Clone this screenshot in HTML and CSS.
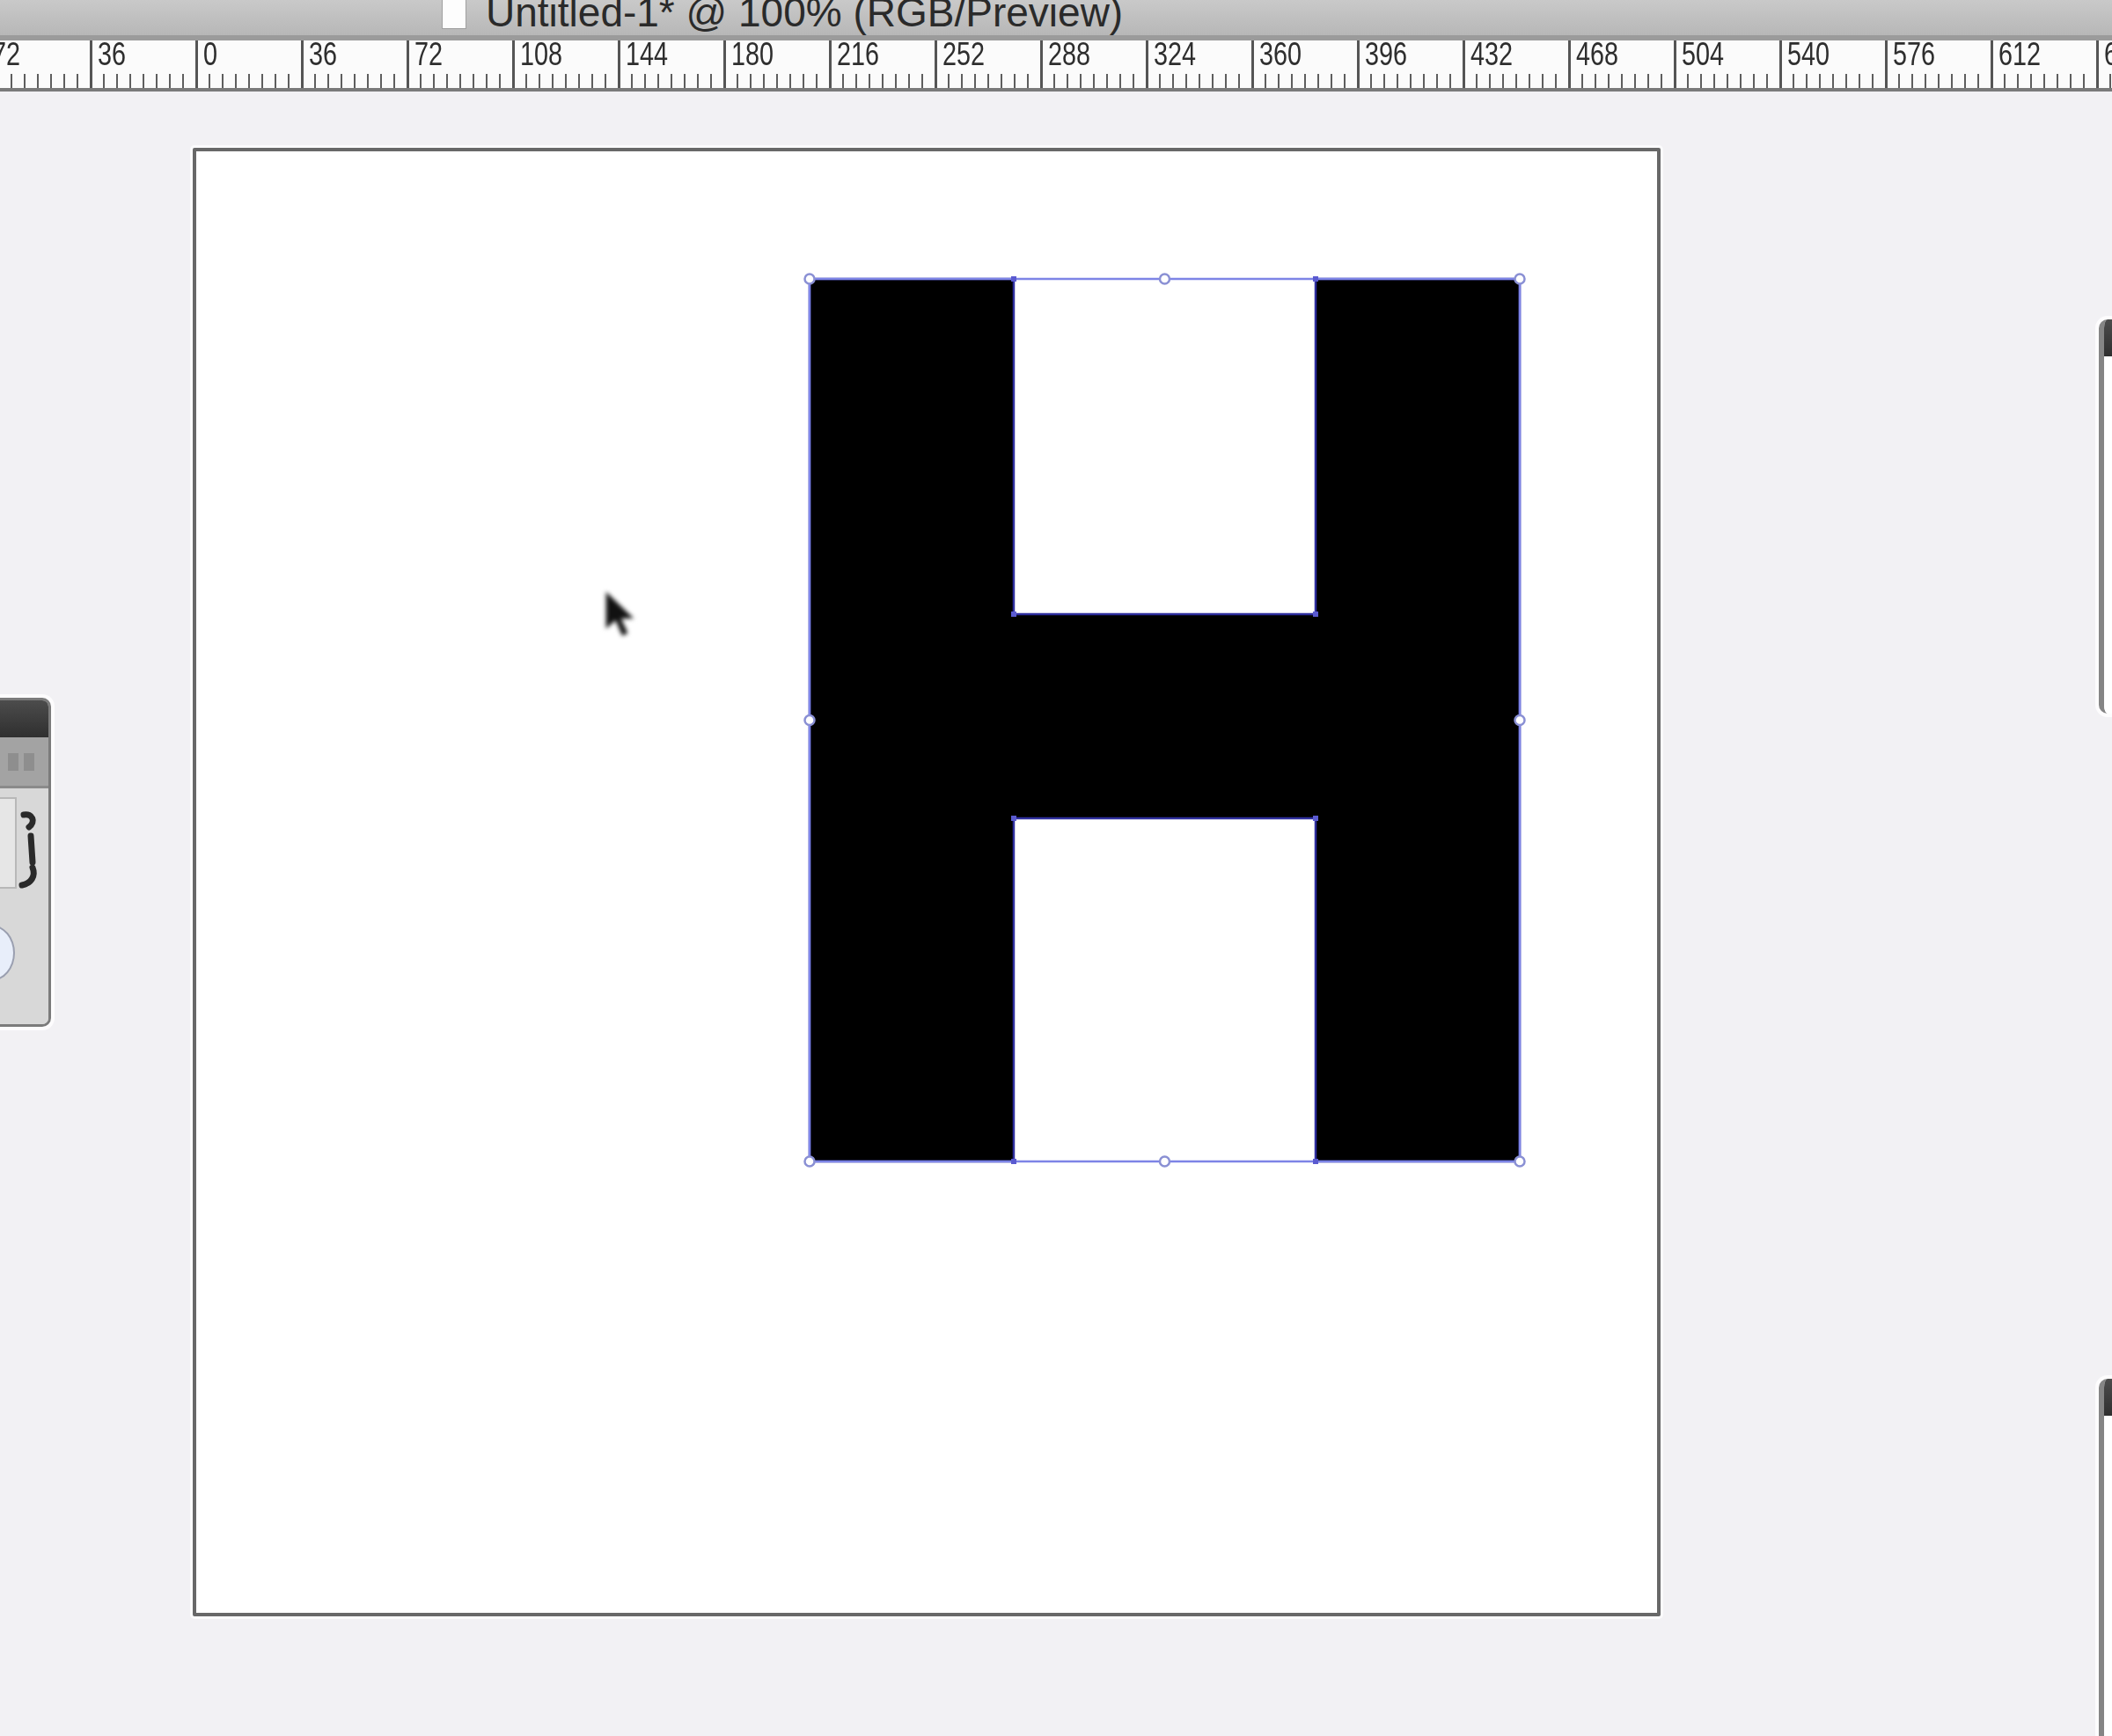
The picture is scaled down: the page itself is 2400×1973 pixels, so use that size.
FILE: index.html
```html
<!DOCTYPE html>
<html lang="en">
<head>
    <meta charset="UTF-8">
    <title>Untitled-1* @ 100% (RGB/Preview)</title>
    <link rel="stylesheet" href="styles.css">
</head>
<body>
    <div class="titlebar">
        <span class="doc-icon"></span>
        <span class="doc-title">Untitled-1* @ 100% (RGB/Preview)</span>
    </div>

    <div class="ruler">
        <div class="ruler-track">
            <div class="ruler-cell"><span>72</span></div>
            <div class="ruler-cell"><span>36</span></div>
            <div class="ruler-cell"><span>0</span></div>
            <div class="ruler-cell"><span>36</span></div>
            <div class="ruler-cell"><span>72</span></div>
            <div class="ruler-cell"><span>108</span></div>
            <div class="ruler-cell"><span>144</span></div>
            <div class="ruler-cell"><span>180</span></div>
            <div class="ruler-cell"><span>216</span></div>
            <div class="ruler-cell"><span>252</span></div>
            <div class="ruler-cell"><span>288</span></div>
            <div class="ruler-cell"><span>324</span></div>
            <div class="ruler-cell"><span>360</span></div>
            <div class="ruler-cell"><span>396</span></div>
            <div class="ruler-cell"><span>432</span></div>
            <div class="ruler-cell"><span>468</span></div>
            <div class="ruler-cell"><span>504</span></div>
            <div class="ruler-cell"><span>540</span></div>
            <div class="ruler-cell"><span>576</span></div>
            <div class="ruler-cell"><span>612</span></div>
            <div class="ruler-cell"><span>648</span></div>
        </div>
    </div>

    <div class="workspace">
        <div class="artboard">
            <!-- drawing uses window coordinates, hence the offset viewBox -->
            <svg class="art" width="1660" height="1661" viewBox="223 172 1660 1661">
                <path class="letter" d="M920 317 H1152 V698 H1495 V317 H1727 V1320 H1495 V930 H1152 V1320 H920 Z"/>
                <rect class="bbox" x="920" y="317" width="807" height="1003"/>
                <g class="anchors">
                    <rect x="1149" y="314" width="6" height="6"/>
                    <rect x="1492" y="314" width="6" height="6"/>
                    <rect x="1149" y="695" width="6" height="6"/>
                    <rect x="1492" y="695" width="6" height="6"/>
                    <rect x="1149" y="927" width="6" height="6"/>
                    <rect x="1492" y="927" width="6" height="6"/>
                    <rect x="1149" y="1317" width="6" height="6"/>
                    <rect x="1492" y="1317" width="6" height="6"/>
                </g>
                <g class="handles">
                    <circle cx="920" cy="317" r="5.5"/>
                    <circle cx="1323.5" cy="317" r="5.5"/>
                    <circle cx="1727" cy="317" r="5.5"/>
                    <circle cx="920" cy="818.5" r="5.5"/>
                    <circle cx="1727" cy="818.5" r="5.5"/>
                    <circle cx="920" cy="1320" r="5.5"/>
                    <circle cx="1323.5" cy="1320" r="5.5"/>
                    <circle cx="1727" cy="1320" r="5.5"/>
                </g>
                <path class="pointer" transform="translate(688 671) scale(1.25)" d="M0 0 L0 36 L9 28 L15 42 L21 39 L15 26 L27 26 Z"/>
            </svg>
        </div>

        <!-- tool palette, mostly off screen on the left -->
        <div class="palette palette-left">
            <div class="palette-head"></div>
            <div class="palette-bar"><i></i><i></i></div>
            <div class="palette-body">
                <span class="swatch-box"></span>
                <svg class="curl" width="30" height="92" viewBox="0 0 30 92">
                    <path d="M8 6 C18 4 22 14 14 20 M16 30 L18 60 M18 66 C22 76 16 84 6 86" />
                </svg>
                <span class="round-btn"></span>
            </div>
        </div>

        <!-- panels docked past the right edge -->
        <div class="palette palette-right top">
            <div class="palette-head"></div>
            <div class="palette-white"></div>
        </div>
        <div class="palette palette-right bottom">
            <div class="palette-head"></div>
            <div class="palette-white"></div>
        </div>
    </div>
</body>
</html>
```

FILE: styles.css
```css
html, body {
    margin: 0;
    padding: 0;
}
body {
    width: 2400px;
    height: 1973px;
    overflow: hidden;
    background-color: #f2f1f4;
    font-family: "Liberation Sans", Arial, sans-serif;
}

/* window title */
.titlebar {
    height: 40px;
    display: flex;
    align-items: flex-start;
    overflow: hidden;
    background: linear-gradient(#c9c9c9, #b7b7b7);
    border-bottom: 6px solid #9b9b9b;
}
.doc-icon {
    width: 28px;
    height: 33px;
    margin-left: 502px;
    background-color: #fdfdfd;
    border: 1px solid #a0a0a0;
    border-top: none;
    box-sizing: border-box;
}
.doc-title {
    margin-left: 22px;
    margin-top: -8px;
    font-size: 46px;
    line-height: 45px;
    color: #2a2a2a;
    white-space: nowrap;
}

/* horizontal ruler */
.ruler {
    height: 54px;
    overflow: hidden;
    background-color: #fbfbfb;
    border-bottom: 4px solid #7a7a7a;
}
.ruler-track {
    display: flex;
    height: 100%;
    margin-left: -18px;
}
.ruler-cell {
    flex: 0 0 120px;
    box-sizing: border-box;
    border-left: 3px solid #555;
    background-image: repeating-linear-gradient(to right, transparent 0 12px, #5e5e5e 12px 14px, transparent 14px 15px);
    background-size: 100% 16px;
    background-position: left bottom;
    background-repeat: no-repeat;
}
.ruler-cell span {
    display: inline-block;
    margin: -5px 0 0 6px;
    font-size: 36px;
    line-height: normal;
    color: #2e2e2e;
    transform: scaleX(0.8);
    transform-origin: left top;
}

/* canvas */
.workspace {
    position: relative;
    height: 1869px;
    overflow: hidden;
}
.artboard {
    width: 1668px;
    height: 1669px;
    margin: 64px 0 0 219px;
    box-sizing: border-box;
    border: 4px solid #686868;
    border-radius: 2px;
    background-color: #fff;
    box-shadow: 0 0 0 3px rgba(255, 255, 255, 0.7);
}
.art {
    display: block;
}
.letter {
    fill: #000;
    stroke: #2e2e9e;
    stroke-width: 2.5;
}
.bbox {
    fill: none;
    stroke: #7d84e6;
    stroke-width: 2.5;
}
.anchors rect {
    fill: #5a5ad0;
}
.handles circle {
    fill: #fff;
    stroke: #8a90d4;
    stroke-width: 2.5;
}
.pointer {
    fill: #111;
    stroke: #fff;
    stroke-width: 1;
    filter: blur(2px);
}

/* floating palettes */
.palette {
    position: absolute;
    border-radius: 10px;
    overflow: hidden;
    box-sizing: border-box;
    box-shadow: 0 0 0 4px rgba(255, 255, 255, 0.8);
}
.palette-head {
    height: 42px;
    background: linear-gradient(#4c4c4c, #2f2f2f);
}
.palette-left {
    left: -200px;
    top: 689px;
    width: 258px;
    height: 374px;
    background-color: #d6d6d6;
    border: 3px solid #7b7b7b;
}
.palette-bar {
    height: 55px;
    background-color: #a3a3a3;
    border-bottom: 3px solid #8a8a8a;
    display: flex;
    justify-content: flex-end;
    align-items: center;
    gap: 6px;
    padding-right: 16px;
}
.palette-bar i {
    width: 12px;
    height: 20px;
    background-color: #8e8e8e;
}
.palette-body {
    position: relative;
    height: 270px;
    background-color: #d8d8d8;
}
.swatch-box {
    position: absolute;
    left: 170px;
    top: 10px;
    width: 42px;
    height: 100px;
    border: 2px solid #b8b8b8;
    background-color: #e6e6e6;
}
.curl {
    position: absolute;
    left: 216px;
    top: 24px;
}
.curl path {
    fill: none;
    stroke: #2a2a2a;
    stroke-width: 7;
    stroke-linecap: round;
}
.round-btn {
    position: absolute;
    left: 160px;
    top: 155px;
    width: 50px;
    height: 60px;
    border-radius: 50%;
    border: 2px solid #9a9fb0;
    background-color: #e8eefa;
}
.palette-right {
    left: 2385px;
    width: 320px;
    background-color: #fff;
    border-left: 6px solid #858585;
}
.palette-right.top {
    top: 259px;
    height: 448px;
}
.palette-right.bottom {
    top: 1463px;
    height: 600px;
}
.palette-white {
    height: 100%;
    background-color: #fff;
}
```
